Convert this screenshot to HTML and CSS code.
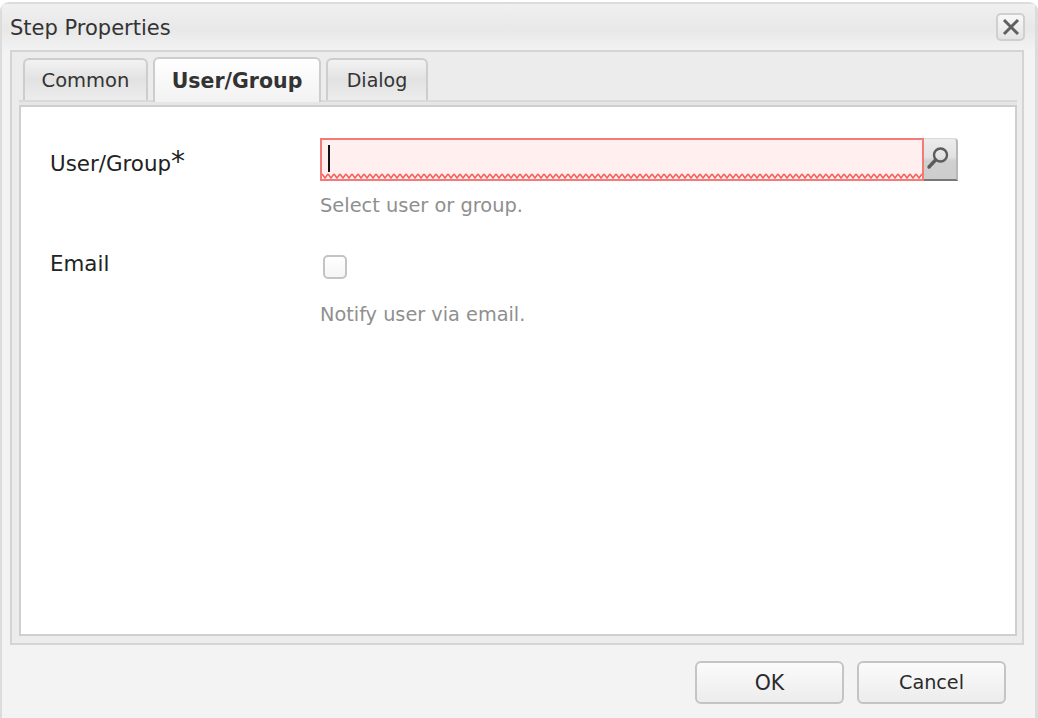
FILE: index.html
```html
<!DOCTYPE html>
<html lang="en">
<head>
<meta charset="utf-8">
<title>Step Properties</title>
<link rel="stylesheet" href="styles.css">
</head>
<body>
<div class="window">
  <header class="titlebar">
    <h1 class="title">Step Properties</h1>
    <button class="close" aria-label="Close">
      <svg width="22" height="22" viewBox="0 0 22 22"><path d="M4 4 18 18M18 4 4 18" fill="none" stroke="#606060" stroke-width="3"/></svg>
    </button>
  </header>
  <section class="panel">
    <nav class="tabs">
      <div class="tab tab-common">Common</div>
      <div class="tab tab-active">User/Group</div>
      <div class="tab tab-dialog">Dialog</div>
    </nav>
    <div class="strip"></div>
    <div class="body">
      <div class="row row-user">
        <label class="label">User/Group<span class="req">*</span></label>
        <div class="field">
          <div class="combo">
            <div class="input">
              <span class="caret"></span>
              <svg class="zigzag" width="100%" height="6"><defs><pattern id="zz" width="6" height="6" patternUnits="userSpaceOnUse"><path d="M0 1 3 5 6 1" fill="none" stroke="#f4605c" stroke-width="1.6"/></pattern></defs><rect width="100%" height="6" fill="url(#zz)"/></svg>
            </div>
            <button class="trigger" aria-label="Search">
              <svg width="30" height="32" viewBox="0 0 30 32"><circle cx="15.5" cy="12" r="6.5" fill="none" stroke="#5c5c5c" stroke-width="2.4"/><path d="M10.5 17 4 24" stroke="#5c5c5c" stroke-width="3.4" stroke-linecap="round"/></svg>
            </button>
          </div>
          <p class="help help-user">Select user or group.</p>
        </div>
      </div>
      <div class="row">
        <label class="label">Email</label>
        <div class="field">
          <span class="check"></span>
          <p class="help help-email">Notify user via email.</p>
        </div>
      </div>
    </div>
  </section>
  <footer class="buttons">
    <button class="btn btn-ok">OK</button>
    <button class="btn btn-cancel">Cancel</button>
  </footer>
</div>
</body>
</html>
```
FILE: styles.css
```css
* { box-sizing: border-box; }
html, body { margin: 0; height: 100%; background: #fff; }
body { font-family: "DejaVu Sans", "Liberation Sans", sans-serif; color: #2b2b2b; overflow: hidden; }
.window {
  width: 1038px; height: 716px;
  margin-top: 2px;
  display: flex; flex-direction: column;
  background: #f3f3f3;
  border: 2px solid #dcdcdc;
  border-bottom: 0; border-right-width: 3px;
  border-radius: 9px 9px 0 0;
  padding: 0 11px 0 8px;
}
.titlebar {
  height: 46px; flex: none;
  display: flex; align-items: center; justify-content: space-between;
  margin: 0 -11px 0 -8px; padding-left: 8px; padding-right: 11px;
  background: linear-gradient(#f0f0f0, #e8e8e8 55%, #f2f2f2);
}
.title { margin: 2px 0 0; font-size: 21px; font-weight: 400; color: #333; }
.close {
  width: 29px; height: 28px; padding: 0; margin-right: -1px;
  display: flex; align-items: center; justify-content: center;
  background: linear-gradient(#f8f8f8, #e4e4e4);
  border: 2px solid #cfcfcf; border-radius: 5px;
}
.panel {
  flex: none; height: 595px;
  display: flex; flex-direction: column;
  background: #ececec;
  border: 2px solid #d4d4d4;
  padding: 0 5px 7px 7px;
}
.tabs { display: flex; height: 48px; flex: none; padding: 6px 0 0 4px; gap: 5px; }
.tab {
  height: 42px; display: flex; align-items: center; justify-content: center;
  font-size: 19px; color: #333;
  background: linear-gradient(#f2f2f2, #e2e2e2 50%, #ececec);
  border: 2px solid #cdcdcd; border-bottom: 0;
  border-radius: 6px 6px 0 0;
}
.tab-common { width: 125px; font-size: 19.5px; }
.tab-active {
  width: 168px; height: 45px; margin-top: -1px; position: relative; z-index: 1;
  font-weight: 700; font-size: 20.5px;
  background: linear-gradient(#fff, #f2f2f2);
}
.tab-dialog { width: 102px; }
.strip { flex: none; height: 5px; border-top: 2px solid #dadada; background: #e6e6e6; }
.body {
  flex: 1;
  padding: 31px 0 0 29px;
  background: #fff;
  border: 2px solid #cfcfcf;
}
.row { display: flex; }
.row-user { height: 111px; }
.label { width: 270px; flex: none; font-size: 21.4px; line-height: 30px; color: #222; }
.row-user .label { padding-top: 11px; }
.req { font-size: 28px; line-height: 20px; }
.field { width: 638px; }
.combo { display: flex; height: 43px; }
.input {
  flex: 1; position: relative;
  background: #ffefef;
  border: 2px solid #f47a76;
}
.caret { position: absolute; left: 6px; top: 5px; width: 2px; height: 27px; background: #111; }
.zigzag { position: absolute; left: 0; bottom: 0; display: block; }
.trigger {
  width: 34px; height: 43px; padding: 0;
  display: flex; align-items: center; justify-content: center;
  background: linear-gradient(#ececec, #e2e2e2 45%, #d0d0d0 55%, #cdcdcd);
  border: 0; border-top: 1px solid #d8d8d8; border-right: 2px solid #b8b8b8; border-bottom: 2px solid #777;
  border-radius: 0 4px 0 0;
}
.help { margin: 0; font-size: 19.4px; color: #8f8f8f; line-height: 30px; }
.help-user { margin-top: 10px; }
.check {
  display: block; width: 24px; height: 24px; margin: 6px 0 0 3px;
  background: linear-gradient(#fff, #f5f5f5);
  border: 2px solid #c4c4c4; border-radius: 5px;
}
.help-email { margin-top: 21px; font-size: 19.3px; }
.buttons { flex: 1; display: flex; justify-content: flex-end; gap: 13px; padding: 16px 19px 0 0; margin-right: -1px; align-items: flex-start; }
.btn {
  width: 149px; height: 43px;
  font: 400 20.5px "DejaVu Sans", sans-serif; color: #2b2b2b;
  background: linear-gradient(#fbfbfb, #ececec);
  border: 2px solid #c4c4c4; border-radius: 6px;
  padding: 0;
}
.btn-cancel { font-size: 19.2px; }
```
